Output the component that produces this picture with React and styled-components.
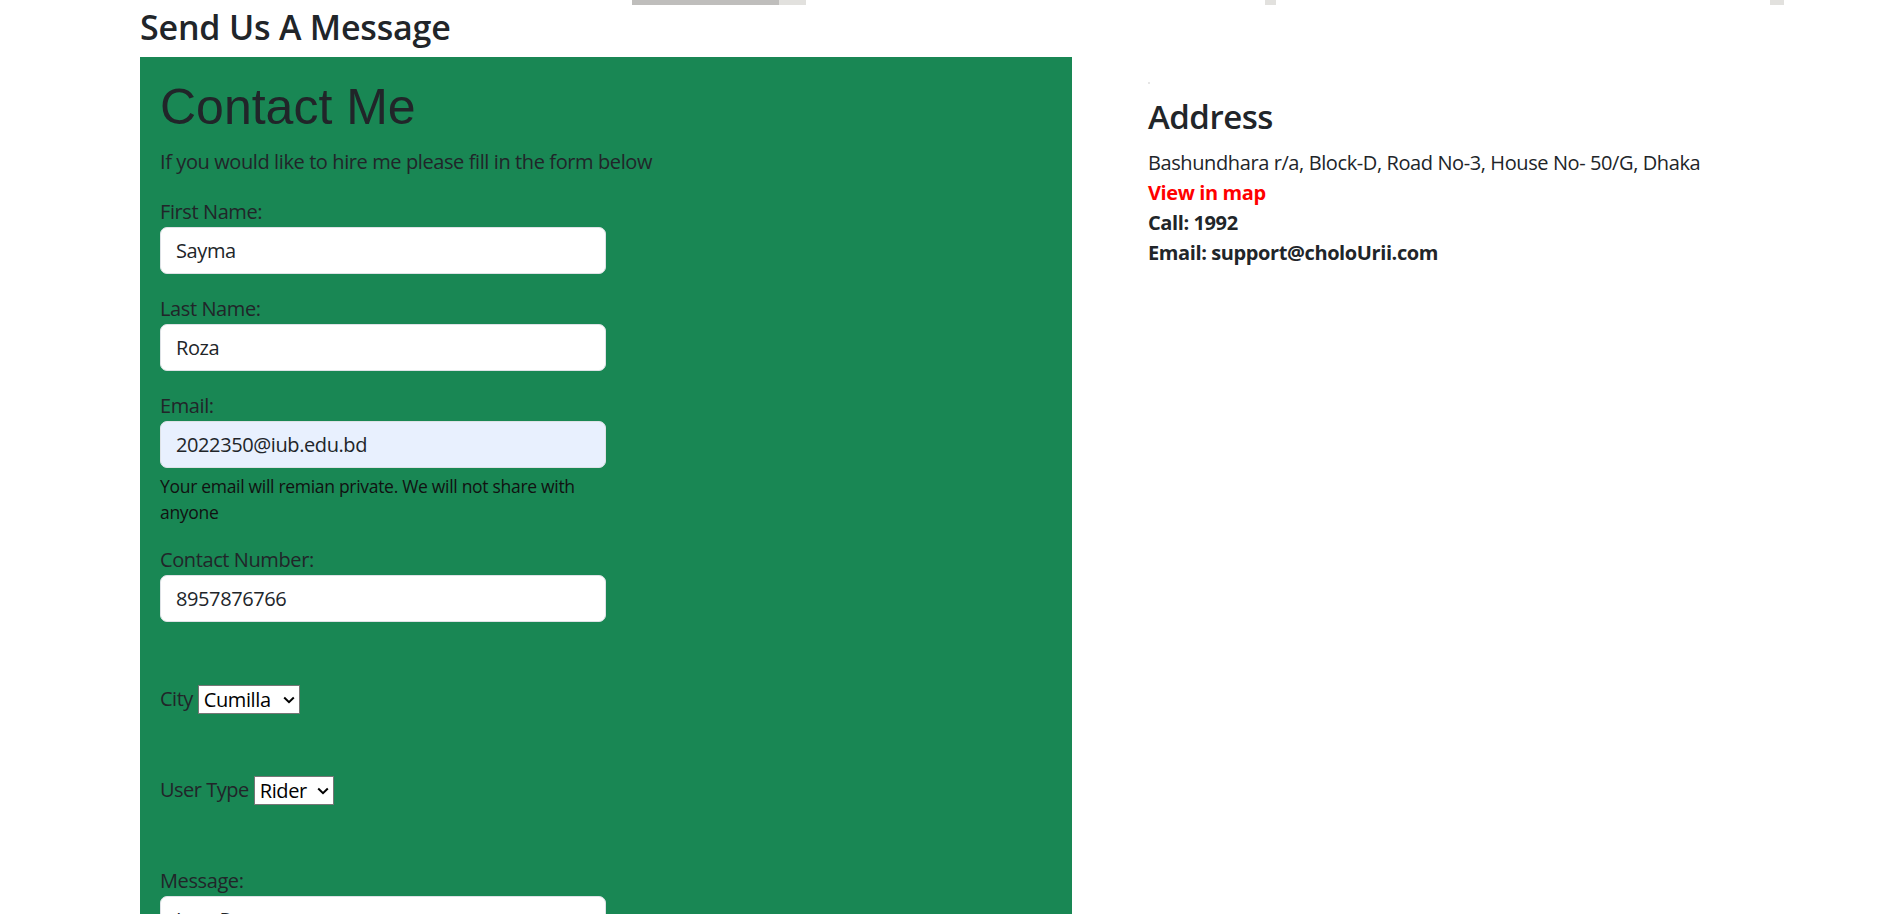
import React from "react";
import styled, { createGlobalStyle } from "styled-components";

const GlobalStyle = createGlobalStyle`
    * {
        box-sizing: border-box;
    }
    body {
        margin: 0;
        font-family: "Open Sans", "Noto Sans", sans-serif;
        font-size: 20px;
        line-height: 1.5;
        letter-spacing: -0.4px;
        color: #212529;
        background: #fff;
    }
`;

const Strip = styled.div`
    display: flex;
    height: 5px;
`;

const StripPiece = styled.div`
    width: ${ p => p.$w }px;
    margin-left: ${ p => p.$offset || 0 }px;
    background: ${ p => p.$tone || "#e2e1de" };
`;

const Page = styled.main`
    padding-left: 140px;
`;

const SectionTitle = styled.h3`
    margin: 2px 0 9px;
    font-size: 34px;
    font-weight: 600;
    line-height: 1.2;
    letter-spacing: -0.2px;
`;

const Row = styled.div`
    display: flex;
    align-items: flex-start;
`;

const FormPanel = styled.section`
    width: 932px;
    padding: 20px;
    background: #198754;
`;

const PanelTitle = styled.h1`
    margin: 0 0 10px;
    font-family: "Liberation Sans", Arial, sans-serif;
    font-size: 50px;
    font-weight: 400;
    line-height: 1.2;
    letter-spacing: 0;
`;

const Lead = styled.p`
    margin: 0 0 20px;
`;

const Group = styled.div`
    width: 446px;
    margin-bottom: 20px;
`;

const Label = styled.label`
    display: block;
`;

const Input = styled.input`
    display: block;
    width: 100%;
    height: 47px;
    padding: 7.5px 15px;
    font: inherit;
    letter-spacing: inherit;
    color: #212529;
    background: ${ p => p.$autofill ? "#e8f0fe" : "#fff" };
    border: 1px solid #dee2e6;
    border-radius: 7px;
    outline: none;
`;

const TextArea = styled.textarea`
    display: block;
    width: 100%;
    height: 120px;
    padding: 7.5px 15px;
    font: inherit;
    letter-spacing: inherit;
    color: #212529;
    background: #fff;
    border: 1px solid #dee2e6;
    border-radius: 7px;
    resize: vertical;
`;

const Help = styled.div`
    margin-top: 5px;
    font-size: 17.5px;
    letter-spacing: -0.3px;
    color: #111;
`;

const SelectRow = styled.div`
    display: flex;
    align-items: center;
    gap: 5px;
    height: 30px;
    margin-top: ${ p => p.$gap }px;
    letter-spacing: -0.5px;
`;

const SelectBox = styled.span`
    position: relative;
    display: inline-flex;
`;

const Select = styled.select`
    appearance: none;
    width: ${ p => p.$w }px;
    height: 29px;
    padding: 0 20px 0 5px;
    font: inherit;
    letter-spacing: -0.4px;
    line-height: 27px;
    color: #000;
    background: #fff;
    border: 1px solid #767676;
    border-radius: 0;
`;

const Chevron = styled.svg`
    position: absolute;
    right: 5px;
    top: 11px;
    pointer-events: none;
`;

const MessageGroup = styled(Group)`
    margin-top: 61px;
`;

const InfoColumn = styled.aside`
    padding: 25px 0 0 76px;
`;

const Pixel = styled.div`
    width: 2px;
    height: 2px;
    margin-bottom: 12px;
    background: #e6e6e6;
`;

const InfoTitle = styled.h3`
    margin: 0 0 10px;
    font-size: 33px;
    font-weight: 600;
    line-height: 1.27;
    letter-spacing: -0.5px;
`;

const InfoLine = styled.div`
    font-weight: ${ p => p.$bold ? 700 : 400 };
    color: ${ p => p.$accent ? "#ff0000" : "#212529" };
`;

const Field = ({ label, name, value, autofill }) => (
    <Group>
        <Label htmlFor={ name }>{ label }</Label>
        <Input id={ name } name={ name } defaultValue={ value } $autofill={ autofill }/>
    </Group>
);

const Dropdown = ({ label, name, width, options, gap }) => (
    <SelectRow $gap={ gap }>
        <label htmlFor={ name }>{ label }</label>
        <SelectBox>
            <Select id={ name } name={ name } $w={ width } defaultValue={ options[0] }>
                { options.map(o => <option key={ o }>{ o }</option>) }
            </Select>
            <Chevron width="12" height="8" viewBox="0 0 12 8">
                <path d="M1.2 1.5 L6 6.2 L10.8 1.5" fill="none" stroke="#000" strokeWidth="2"/>
            </Chevron>
        </SelectBox>
    </SelectRow>
);

export default function App() {
    return (
        <>
            <GlobalStyle/>
            <Strip>
                <StripPiece $offset={ 632 } $w={ 147 } $tone="#bfbebc"/>
                <StripPiece $w={ 27 }/>
                <StripPiece $offset={ 459 } $w={ 11 }/>
                <StripPiece $offset={ 494 } $w={ 14 }/>
            </Strip>
            <Page>
                <SectionTitle>Send Us A Message</SectionTitle>
                <Row>
                    <FormPanel>
                        <PanelTitle>Contact Me</PanelTitle>
                        <Lead>If you would like to hire me please fill in the form below</Lead>
                        <Field label="First Name:" name="fname" value="Sayma"/>
                        <Field label="Last Name:" name="lname" value="Roza"/>
                        <Group>
                            <Label htmlFor="email">Email:</Label>
                            <Input id="email" name="email" type="email" defaultValue="2022350@iub.edu.bd" $autofill/>
                            <Help>Your email will remian private. We will not share with anyone</Help>
                        </Group>
                        <Field label="Contact Number:" name="phone" value="8957876766"/>
                        <Dropdown label="City" name="city" width={ 102 } gap={ 62 } options={ ["Cumilla", "Dhaka", "Chattogram", "Sylhet"] }/>
                        <Dropdown label="User Type" name="usertype" width={ 80 } gap={ 61 } options={ ["Rider", "Driver"] }/>
                        <MessageGroup>
                            <Label htmlFor="message">Message:</Label>
                            <TextArea id="message" name="message" defaultValue="I am Roza"/>
                        </MessageGroup>
                    </FormPanel>
                    <InfoColumn>
                        <Pixel/>
                        <InfoTitle>Address</InfoTitle>
                        <InfoLine>Bashundhara r/a, Block-D, Road No-3, House No- 50/G, Dhaka</InfoLine>
                        <InfoLine $bold $accent>View in map</InfoLine>
                        <InfoLine $bold>Call: 1992</InfoLine>
                        <InfoLine $bold>Email: support@choloUrii.com</InfoLine>
                    </InfoColumn>
                </Row>
            </Page>
        </>
    );
}
